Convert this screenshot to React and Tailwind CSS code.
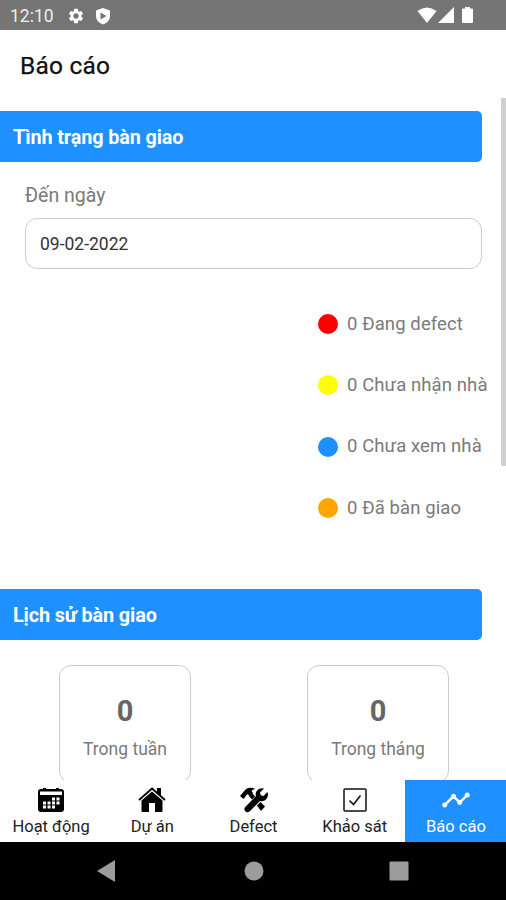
import { MdSettings, MdTimeline } from "react-icons/md";

function SectionHeader({ children }) {
  return (
    <div className="flex h-[51px] w-[482px] shrink-0 items-center rounded-r-[5px] bg-[#1e90ff] pl-[13px] pt-[3px] text-[19.8px] font-bold tracking-[-0.1px] text-white">
      {children}
    </div>
  );
}

function Legend({ color, children }) {
  return (
    <div className="flex h-[61.3px] shrink-0 items-center">
      <span className={`mt-px size-5 rounded-full ${color}`} />
      <span className="ml-[9px] mt-[2px] whitespace-nowrap text-[18.5px] text-[#7a7a7a] tracking-[0.1px]">{children}</span>
    </div>
  );
}

function Stat({ width, children }) {
  return (
    <div className={`flex h-[118px] flex-col items-center rounded-[12px] border border-[#ccc] pt-[27px] ${width}`}>
      <span className="text-[29px] font-bold leading-[36px] text-[#666]">0</span>
      <span className="mt-[8px] text-[17.5px] leading-[24px] text-[#7a7a7a]">{children}</span>
    </div>
  );
}

function Tab({ active, icon, children }) {
  return (
    <div className={`flex flex-1 flex-col items-center pl-px pt-1.5 ${active ? "bg-[#1e90ff] text-white" : "text-[#222]"}`}>
      <div className="flex h-[28px] items-center justify-center">{icon}</div>
      <span className="mt-px whitespace-nowrap text-[16.5px] leading-[24px]">{children}</span>
    </div>
  );
}

const CalendarIcon = () => (
  <svg width="26" height="26" viewBox="0 0 26 26">
    <path d="M3 2h2V1h3v1h10V1h3v1h2q3 0 3 3v17q0 3-3 3H3q-3 0-3-3V5q0-3 3-3z" />
    <path d="M2 4.500h22V8H2z" fill="#fff" />
    <path d="M14 10.500h3v3h-3zM18.500 10.500h3v3h-3zM5 14.500h3v3H5zM9.500 14.500h3v3h-3zM14 14.500h3v3h-3zM18.500 14.500h3v3h-3zM5 18.500h3v3H5zM9.500 18.500h3v3h-3zM14 18.500h3v3h-3z" fill="#fff" />
  </svg>
);

const HouseIcon = () => (
  <svg width="28" height="26" viewBox="0 0 28 26">
    <path d="M14 4.500l10.500 9V24q0 1-1 1H17v-9h-6v9H4.500q-1 0-1-1V13.500z" />
    <path d="M1 13L14 1.500 27 13" fill="none" stroke="#000" strokeWidth="1.800" />
    <path d="M19 1h4v8l-4-3.500z" />
  </svg>
);

const ToolsIcon = () => (
  <svg width="30" height="26" viewBox="0 0 30 26">
    <path d="M1 9L7 2q4-2.500 9-.3l-3.500 2 1.500 2.300-3.300 3.300L8.500 7 4.500 12z" />
    <path d="M18 18.500l3.500-3.500 4.500 4.500-4 4.500z" />
    <path d="M25 1.500l-4 4 .7 2.800 2.800.7 4-4q1.500 4.500-1.500 7.500-2.500 2.500-6 1.500L10.500 24.500q-2 1.500-4 0-2-2-.5-4.300L17 9q-1-3 1-5.500Q21 .5 25 1.500z" />
    <path d="M10 9l3-3 3 3.500-3 3z" />
  </svg>
);

const CheckIcon = () => (
  <svg width="24" height="24" viewBox="0 0 24 24" fill="none" stroke="#111">
    <rect x="1" y="1" width="22" height="22" rx="1" strokeWidth="1.500" />
    <path d="M6.500 12.500l4 4 7-9" strokeWidth="1.600" />
  </svg>
);

export default function App() {
  return (
    <div className="flex h-[900px] w-[506px] flex-col overflow-hidden bg-white font-['Roboto','Noto_Sans',sans-serif]">
      <header className="flex h-[30px] shrink-0 items-center bg-[#757575] pt-px text-white">
        <span className="ml-[10px] mt-px w-[57px] text-[17.5px] text-[#eee]">12:10</span>
        <MdSettings size={18} />
        <svg className="ml-[10px]" width="16" height="18" viewBox="0 0 16 18">
          <path d="M8 1l7 2.500V9q0 6-7 8.500Q1 15 1 9V3.500z" fill="#fff" />
          <path d="M5.500 5.500l6 3.500-6 3.500z" fill="#757575" />
        </svg>
        <div className="ml-auto mr-[33px] flex items-center pb-px">
          <svg width="20" height="18" viewBox="0 0 20 18" fill="#fff"><path d="M.5 5Q10-2 19.500 5L10 17z" /></svg>
          <svg className="ml-px" width="16" height="18" viewBox="0 0 16 18" fill="#fff"><path d="M16 1v16H0z" /></svg>
          <svg className="ml-[8px]" width="11" height="18" viewBox="0 0 11 18" fill="#fff"><path d="M3 1h5v1.500h2q1 0 1 1V16q0 1-1 1H1q-1 0-1-1V3.500q0-1 1-1h2z" /></svg>
        </div>
      </header>
      <h1 className="flex h-[68px] shrink-0 items-center pl-[20px] pt-1 text-[24.5px] tracking-[0.2px] text-[#111] [-webkit-text-stroke:0.25px_#111]">Báo cáo</h1>
      <div className="flex h-[682px] shrink-0 overflow-hidden">
        <main className="w-[501px] shrink-0 pt-[13px]">
          <SectionHeader>Tình trạng bàn giao</SectionHeader>
          <div className="pl-[25px] pt-[21px]">
            <label className="block h-[35px] text-[19.5px] leading-[26px] text-[#7a7a7a]">Đến ngày</label>
            <div className="flex h-[51px] w-[457px] items-center rounded-[12px] border border-[#ccc] pl-[14px] pt-px text-[17.5px] text-[#333]">09-02-2022</div>
          </div>
          <div className="flex h-[320px] flex-col pl-[318px] pt-[24px]">
            <Legend color="bg-[#ff0000]">0 Đang defect</Legend>
            <Legend color="bg-[#ffff00]">0 Chưa nhận nhà</Legend>
            <Legend color="bg-[#1e90ff]">0 Chưa xem nhà</Legend>
            <Legend color="bg-[#ffa500]">0 Đã bàn giao</Legend>
          </div>
          <SectionHeader>Lịch sử bàn giao</SectionHeader>
          <div className="flex gap-[116px] pl-[59px] pt-[25px]">
            <Stat width="w-[132px]">Trong tuần</Stat>
            <Stat width="w-[142px]">Trong tháng</Stat>
          </div>
        </main>
        <div className="h-[368px] w-[5px] bg-[#d0d0d0]" />
      </div>
      <nav className="flex h-[62px] shrink-0 bg-white">
        <Tab icon={<CalendarIcon />}>Hoạt động</Tab>
        <Tab icon={<HouseIcon />}>Dự án</Tab>
        <Tab icon={<ToolsIcon />}>Defect</Tab>
        <Tab icon={<CheckIcon />}>Khảo sát</Tab>
        <Tab active icon={<MdTimeline size={30} />}>Báo cáo</Tab>
      </nav>
      <footer className="flex h-[58px] shrink-0 items-center bg-black pl-[97px]">
        <svg width="320" height="22" viewBox="0 0 320 22" fill="#9c9c9c">
          <path d="M0 11L18 0v22z" />
          <circle cx="157" cy="11" r="9.500" />
          <rect x="292.500" y="1.500" width="19" height="19" rx="1" />
        </svg>
      </footer>
    </div>
  );
}
